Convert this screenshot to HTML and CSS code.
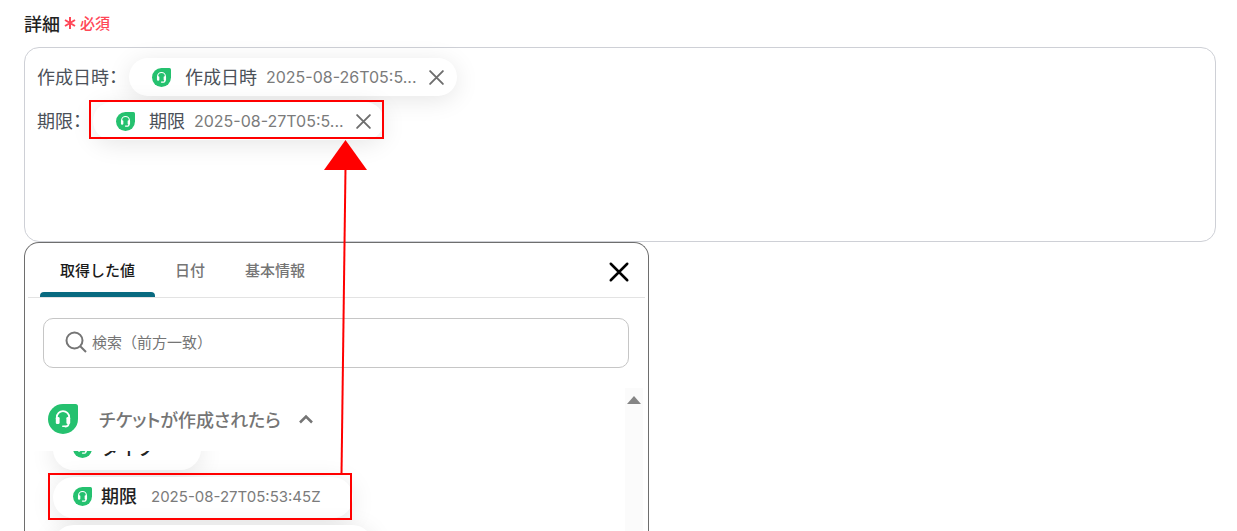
FILE: index.html
```html
<!DOCTYPE html>
<html lang="ja">
<head>
  <meta charset="UTF-8">
  <meta name="viewport" content="width=device-width, initial-scale=1.0">
  <title>詳細</title>
  <link rel="stylesheet" href="styles.css">
</head>
<body>
  <svg class="sprite" aria-hidden="true">
    <symbol id="headset" viewBox="0 0 30 30">
      <path fill="#25c16f" d="M15 0h12.500a2.500 2.500 0 0 1 2.500 2.500V15A15 15 0 1 1 15 0z"/>
      <path fill="none" stroke="#fff" stroke-width="1.800" d="M8.800 14.500v-1.200a6.200 6.200 0 0 1 12.400 0v1.200M20.600 19v.8q0 2.700-3.800 2.700"/>
      <rect x="7.800" y="13" width="3.800" height="7" rx="1.300" fill="#fff"/>
      <rect x="18.400" y="13" width="3.800" height="7" rx="1.300" fill="#fff"/>
      <rect x="14" y="21.500" width="3.600" height="1.600" rx=".8" fill="#fff"/>
    </symbol>
    <symbol id="cross" viewBox="0 0 16 16">
      <path fill="none" stroke="currentColor" stroke-width="1.800" stroke-linecap="round" d="M2 2l12 12M14 2L2 14"/>
    </symbol>
  </svg>

  <main class="page">
    <div class="field-label">
      <span id="detail-label">詳細</span>
      <span class="required">
        <svg width="12" height="12" viewBox="0 0 12 12"><path fill="none" stroke="currentColor" stroke-width="2" d="M6 0v12M1 3l10 6M11 3L1 9"/></svg>
        必須
      </span>
    </div>

    <div class="editor" role="textbox" aria-labelledby="detail-label">
      <div class="line">
        <span class="line-text">作成日時：</span>
        <span class="chip">
          <svg class="chip-icon"><use href="#headset"/></svg>
          <span class="chip-name">作成日時</span>
          <span class="chip-value">2025-08-26T05:5...</span>
          <button class="chip-remove" aria-label="削除"><svg width="17" height="17"><use href="#cross"/></svg></button>
        </span>
      </div>
      <div class="line">
        <span class="line-text">期限：</span>
        <span class="chip">
          <svg class="chip-icon"><use href="#headset"/></svg>
          <span class="chip-name">期限</span>
          <span class="chip-value">2025-08-27T05:5...</span>
          <button class="chip-remove" aria-label="削除"><svg width="17" height="17"><use href="#cross"/></svg></button>
        </span>
      </div>
    </div>

    <section class="picker">
      <div class="tabs">
        <button class="tab active">取得した値</button>
        <button class="tab">日付</button>
        <button class="tab">基本情報</button>
        <button class="picker-close" aria-label="閉じる"><svg width="22" height="22"><use href="#cross"/></svg></button>
      </div>

      <label class="search">
        <svg width="22" height="22" viewBox="0 0 22 22"><path fill="none" stroke="currentColor" stroke-width="2" d="M17.500 9.500a8 8 0 1 1-16 0a8 8 0 0 1 16 0zM15 15l6 6"/></svg>
        <input type="text" placeholder="検索（前方一致）" aria-label="検索（前方一致）">
      </label>

      <div class="results">
        <div class="group">
          <button class="group-head">
            <svg class="group-icon"><use href="#headset"/></svg>
            <span>チケットが作成されたら</span>
            <svg class="caret" width="14" height="10" viewBox="0 0 14 10"><path fill="none" stroke="currentColor" stroke-width="2.500" d="M1 8.500l6-6 6 6"/></svg>
          </button>
          <div class="group-view">
            <div class="group-items">
              <button class="item">
                <svg class="chip-icon"><use href="#headset"/></svg>
                <span class="item-name">タイプ</span>
                <span class="chip-value"></span>
              </button>
              <button class="item">
                <svg class="chip-icon"><use href="#headset"/></svg>
                <span class="item-name">期限</span>
                <span class="chip-value">2025-08-27T05:53:45Z</span>
              </button>
              <button class="item item-next" aria-label="次の値"></button>
            </div>
          </div>
        </div>
        <div class="scrollbar"><svg width="14" height="8" viewBox="0 0 14 8"><path fill="#858585" d="M7 0l7 8H0z"/></svg></div>
      </div>
    </section>
  </main>

  <!-- callouts -->
  <div class="mark mark-editor"></div>
  <div class="mark mark-item"></div>
  <svg class="arrow" width="44" height="334" viewBox="0 0 44 334">
    <path stroke="#f00" stroke-width="2" d="M21.500 28L17.500 334"/>
    <path fill="#f00" d="M21.500 0L43 30H0z"/>
  </svg>
</body>
</html>
```

FILE: styles.css
```css
* {
  box-sizing: border-box;
}

body {
  margin: 0;
  background: #fff;
  color: #222;
  font-family: Inter, "Noto Sans CJK JP", sans-serif;
  font-size: 18px;
  overflow: hidden;
}

button {
  padding: 0;
  border: none;
  background: none;
  font: inherit;
  color: inherit;
  cursor: pointer;
}

svg {
  display: block;
  flex: none;
}

.sprite {
  position: absolute;
  width: 0;
  height: 0;
}

.page {
  display: flex;
  flex-direction: column;
  height: 100vh;
  padding: 0 21px 0 24px;
}

.field-label {
  display: flex;
  align-items: center;
  flex: none;
  gap: 4px;
  height: 47px;
  padding-bottom: 2px;
  font-weight: 500;
}

.required {
  display: flex;
  align-items: center;
  gap: 4px;
  font-size: 15px;
  color: #ff4757;
}

.editor {
  flex: none;
  min-height: 195px;
  padding: 7px 12px;
  border: 1px solid #ced0d6;
  border-radius: 15px;
  color: #4b5159;
}

.line {
  display: flex;
  align-items: center;
  gap: 11px;
  height: 44px;
}

.line-text {
  padding-bottom: 3px;
  font-feature-settings: "palt";
}

.chip {
  display: flex;
  align-items: center;
  gap: 9px;
  height: 38px;
  padding: 0 12px 0 23px;
  border-radius: 19px;
  background: #fff;
  box-shadow: 0 4px 24px rgba(0, 0, 0, 0.1);
}

.chip-name {
  padding-bottom: 2px;
}

.chip .chip-icon {
  margin-right: 5px;
}

.chip-icon {
  width: 19px;
  height: 19px;
}

.chip-value {
  font-size: 16px;
  color: #7b7b7b;
}

.chip-remove {
  margin-left: 2px;
  color: #6e6e6e;
}

.picker {
  flex: 1;
  display: flex;
  flex-direction: column;
  min-height: 0;
  width: 625px;
  max-width: 100%;
  border: 1px solid #6e6e6e;
  border-bottom: none;
  border-radius: 15px 15px 0 0;
}

.tabs {
  display: flex;
  flex: none;
  height: 55px;
  margin: 0 3px;
  padding: 0 15px 0 12px;
  border-bottom: 1px solid #e3e3e3;
}

.tab {
  position: relative;
  padding: 0 20px 2px;
  font-size: 15px;
  font-weight: 500;
  color: #757575;
}

.tab.active {
  color: #1a1a1a;
}

.tab.active::after {
  content: "";
  position: absolute;
  left: 0;
  right: 0;
  bottom: 0;
  height: 5px;
  border-radius: 4px 4px 0 0;
  background: #086a80;
}

.picker-close {
  margin: 4px 0 0 auto;
  color: #000;
}

.search {
  display: flex;
  align-items: center;
  flex: none;
  gap: 5px;
  height: 50px;
  margin: 20px 19px 20px 18px;
  padding: 0 21px 2px;
  border: 1px solid #c6c6c6;
  border-radius: 10px;
  color: #757575;
}

.search input {
  flex: 1;
  padding: 0;
  border: none;
  outline: none;
  background: none;
  font: inherit;
  font-size: 15px;
}

.search input::placeholder {
  color: #757575;
}

.results {
  display: flex;
  flex: 1;
  min-height: 0;
  margin-right: 5px;
}

.group {
  display: flex;
  flex-direction: column;
  flex: 1;
}

.group-head {
  display: flex;
  align-items: center;
  flex: none;
  height: 63px;
  padding: 0 0 2px 23px;
  font-weight: 500;
  font-feature-settings: "palt";
  color: #757575;
}

.group-icon {
  width: 30px;
  height: 30px;
  margin-right: 21px;
}

.caret {
  margin-left: 18px;
}

.group-view {
  flex: 1;
  min-height: 0;
  overflow: hidden;
}

/* list is scrolled half a row down */
.group-items {
  display: flex;
  flex-direction: column;
  align-items: flex-start;
  gap: 7px;
  margin-top: -22px;
  padding-left: 28px;
}

.item {
  display: flex;
  align-items: center;
  flex: none;
  gap: 9px;
  height: 41px;
  padding: 0 32px 3px 20px;
  border-radius: 21px;
  background: #fff;
  box-shadow: 0 4px 24px rgba(0, 0, 0, 0.1);
}

.item-name {
  padding-bottom: 2px;
  font-weight: 500;
}

.item .chip-value {
  margin-left: 5px;
  font-size: 15px;
}

.item-next {
  width: 320px;
}

.scrollbar {
  display: flex;
  justify-content: center;
  width: 18px;
  padding-top: 8px;
  background: #fbfbfb;
}

.mark {
  position: absolute;
  border: 2px solid #f00;
}

.mark-editor {
  left: 89px;
  top: 100px;
  width: 295px;
  height: 39px;
}

.mark-item {
  left: 48px;
  top: 473px;
  width: 304px;
  height: 47px;
}

.arrow {
  position: absolute;
  left: 324px;
  top: 140px;
}
```
